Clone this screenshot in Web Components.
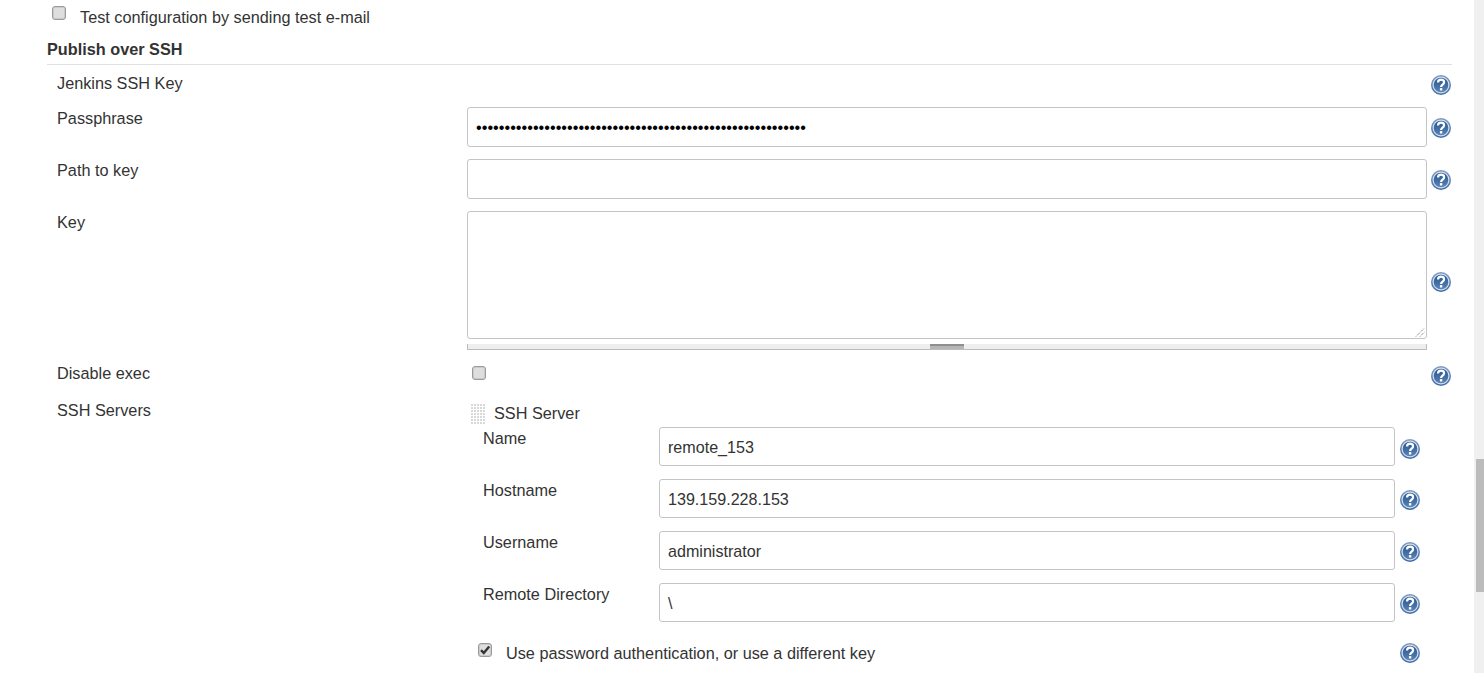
<!DOCTYPE html>
<html>
<head>
<meta charset="utf-8">
<title>Publish over SSH</title>
<style>
  html, body { margin: 0; height: 100%; overflow: hidden; background: #fff; }
  body { font: 16.25px "Liberation Sans", Arial, sans-serif; color: #333; }
</style>
</head>
<body>
<config-page>
  <check-row class="top"><j-check slot="box"></j-check>Test configuration by sending test e-mail</check-row>
  <section-head>Publish over SSH</section-head>

  <form-row label="Jenkins SSH Key" height="30" label-top="8" shift="9"></form-row>
  <form-row label="Passphrase" height="40" gap="12" shift="2">
    <text-field class="pass">••••••••••••••••••••••••••••••••••••••••••••••••••••••••••</text-field>
  </form-row>
  <form-row label="Path to key" height="40" gap="12" shift="2"><text-field></text-field></form-row>
  <form-row label="Key" height="139" gap="12" shift="3"><text-area></text-area></form-row>
  <form-row label="Disable exec" height="28" gap="12" label-top="1" shift="0"><j-check class="inset"></j-check></form-row>

  <server-list label="SSH Servers">
    <drag-head>SSH Server</drag-head>
    <server-row label="Name" gap="3" shift="5"><text-field>remote_153</text-field></server-row>
    <server-row label="Hostname"><text-field>139.159.228.153</text-field></server-row>
    <server-row label="Username"><text-field>administrator</text-field></server-row>
    <server-row label="Remote Directory"><text-field>\</text-field></server-row>
    <check-row class="auth"><j-check slot="box" checked></j-check>Use password authentication, or use a different key<j-help slot="help"></j-help></check-row>
  </server-list>
</config-page>
<page-scrollbar></page-scrollbar>

<script>
const helpTemplate = document.createElement("template");
helpTemplate.innerHTML = `
  <style>
    :host { display: block; width: 22px; height: 22px; flex: none; }
    svg { display: block; width: 22px; height: 22px; }
  </style>
  <svg viewBox="0 0 22 22">
    <defs>
      <linearGradient id="core" x1="0" y1="0" x2="0" y2="1">
        <stop offset="0" stop-color="#24528e"/>
        <stop offset="1" stop-color="#5d86b8"/>
      </linearGradient>
      <linearGradient id="rim" x1="0" y1="0" x2="0" y2="1">
        <stop offset="0" stop-color="#7d9cc4"/>
        <stop offset="1" stop-color="#3f6ca6"/>
      </linearGradient>
    </defs>
    <circle cx="11" cy="11" r="10" fill="url(#rim)"/>
    <circle cx="11" cy="11" r="7.9" fill="url(#core)" stroke="#d3deeb" stroke-width="1.2"/>
    <path d="M8 8.6c0-1.8 1.3-2.9 3.1-2.9s3 1.1 3 2.6c0 2.3-3 2.3-3 4.6" fill="none" stroke="#fff" stroke-width="2.2"/>
    <rect x="9.9" y="14.1" width="2.4" height="2.4" fill="#fff"/>
  </svg>
`;
class JHelp extends HTMLElement {
  constructor() {
    super();
    this.attachShadow({ mode: "open" });
    this.shadowRoot.appendChild(helpTemplate.content.cloneNode(true));
  }
}

const checkTemplate = document.createElement("template");
checkTemplate.innerHTML = `
  <style>
    :host { display: block; width: 14px; height: 14px; flex: none; box-sizing: border-box;
      border: 1px solid #9a9a9a; border-radius: 3px; background: #dedede;
      box-shadow: inset 0 0 0 1px #cacaca; }
    :host(.inset) { margin: 4px 0 0 5px; }
    svg { display: none; width: 12px; height: 12px; }
    :host([checked]) svg { display: block; }
  </style>
  <svg viewBox="0 0 12 12"><path d="M2 6.2l2.8 2.8L10.2 2.6" fill="none" stroke="#333" stroke-width="2.4"/></svg>
`;
class JCheck extends HTMLElement {
  constructor() {
    super();
    this.attachShadow({ mode: "open" });
    this.shadowRoot.appendChild(checkTemplate.content.cloneNode(true));
  }
}

const fieldTemplate = document.createElement("template");
fieldTemplate.innerHTML = `
  <style>
    :host { display: flex; align-items: center; box-sizing: border-box; height: 100%;
      padding: 2px 8px 0; border: 1px solid #c4c4c4; border-radius: 3px; background: #fff;
      font-size: 16.1px; color: #333; white-space: nowrap; overflow: hidden; }
    :host(.pass) { padding: 0 0 0 8px; color: #000; font-size: 16.25px; }
  </style>
  <slot></slot>
`;
class TextField extends HTMLElement {
  constructor() {
    super();
    this.attachShadow({ mode: "open" });
    this.shadowRoot.appendChild(fieldTemplate.content.cloneNode(true));
  }
}

const areaTemplate = document.createElement("template");
areaTemplate.innerHTML = `
  <style>
    :host { display: flex; flex-direction: column; height: 100%; }
    .box { position: relative; flex: none; height: 128px; box-sizing: border-box;
      border: 1px solid #c4c4c4; border-radius: 3px; background: #fff; }
    .box svg { position: absolute; right: 0; bottom: 0; width: 11px; height: 11px; }
    .grip { flex: none; display: flex; justify-content: center; box-sizing: border-box; height: 6px;
      margin-top: 5px; background: #eee; border-bottom: 1px solid #bdbdbd; border-left: 1px solid #bdbdbd; border-right: 1px solid #bdbdbd; }
    .grip i { display: block; width: 34px; height: 5px; background: linear-gradient(#8f8f8f 0, #8f8f8f 2px, #b5b5b5 2px); }
  </style>
  <div class="box">
    <svg viewBox="0 0 11 11"><path d="M1 9.5L9.5 1M5 9.5L9.5 5" stroke="#666" stroke-width="1" stroke-dasharray="1 1" fill="none"/></svg>
  </div>
  <div class="grip"><i></i></div>
`;
class TextArea extends HTMLElement {
  constructor() {
    super();
    this.attachShadow({ mode: "open" });
    this.shadowRoot.appendChild(areaTemplate.content.cloneNode(true));
  }
}

const rowTemplate = document.createElement("template");
rowTemplate.innerHTML = `
  <style>
    :host { display: grid; grid-template-columns: 410px 960px 22px; column-gap: 0; padding-left: 10px; box-sizing: border-box; }
    .label { line-height: 20px; }
    .main { min-width: 0; }
    j-help { align-self: center; margin-left: 3px; }
  </style>
  <div class="label"></div>
  <div class="main"><slot></slot></div>
  <j-help></j-help>
`;
class FormRow extends HTMLElement {
  constructor() {
    super();
    this.attachShadow({ mode: "open" });
    this.shadowRoot.appendChild(rowTemplate.content.cloneNode(true));
  }

  connectedCallback() {
    const label = this.shadowRoot.querySelector(".label");
    label.textContent = this.getAttribute("label");
    label.style.paddingTop = (this.getAttribute("label-top") || 1) + "px";
    this.style.height = this.getAttribute("height") + "px";
    this.style.marginTop = (this.getAttribute("gap") || 0) + "px";
    this.shadowRoot.querySelector("j-help").style.marginTop = (this.getAttribute("shift") || 0) + "px";
  }
}

const serverListTemplate = document.createElement("template");
serverListTemplate.innerHTML = `
  <style>
    :host { display: grid; grid-template-columns: 410px 960px; padding-left: 10px; margin-top: 13px; }
    .label { line-height: 20px; margin-top: -3px; }
  </style>
  <div class="label"></div>
  <div><slot></slot></div>
`;
class ServerList extends HTMLElement {
  constructor() {
    super();
    this.attachShadow({ mode: "open" });
    this.shadowRoot.appendChild(serverListTemplate.content.cloneNode(true));
  }

  connectedCallback() {
    this.shadowRoot.querySelector(".label").textContent = this.getAttribute("label");
  }
}

const dragTemplate = document.createElement("template");
dragTemplate.innerHTML = `
  <style>
    :host { display: flex; align-items: center; gap: 9px; height: 21px; padding-left: 3px; line-height: 20px; }
    i { display: block; width: 15px; height: 21px; flex: none;
      background-image: linear-gradient(#fff 1px, transparent 1px), linear-gradient(90deg, #fff 1px, #d8d8d8 1px);
      background-size: 3px 3px; }
    span { margin-top: -2px; }
  </style>
  <i></i><span><slot></slot></span>
`;
class DragHead extends HTMLElement {
  constructor() {
    super();
    this.attachShadow({ mode: "open" });
    this.shadowRoot.appendChild(dragTemplate.content.cloneNode(true));
  }
}

const serverRowTemplate = document.createElement("template");
serverRowTemplate.innerHTML = `
  <style>
    :host { display: grid; grid-template-columns: 176px 736px 20px; column-gap: 0; height: 39px; margin-top: 13px; padding-left: 16px; }
    .label { line-height: 20px; padding-top: 1px; }
    j-help { align-self: center; margin: 3px 0 0 4px; }
  </style>
  <div class="label"></div>
  <div><slot></slot></div>
  <j-help></j-help>
`;
class ServerRow extends HTMLElement {
  constructor() {
    super();
    this.attachShadow({ mode: "open" });
    this.shadowRoot.appendChild(serverRowTemplate.content.cloneNode(true));
  }

  connectedCallback() {
    this.shadowRoot.querySelector(".label").textContent = this.getAttribute("label");
    if (this.hasAttribute("gap")) this.style.marginTop = this.getAttribute("gap") + "px";
    if (this.hasAttribute("shift")) this.shadowRoot.querySelector("j-help").style.marginTop = this.getAttribute("shift") + "px";
  }
}

const checkRowTemplate = document.createElement("template");
checkRowTemplate.innerHTML = `
  <style>
    :host { display: flex; align-items: center; line-height: 20px; }
    :host(.top) { height: 34px; padding-left: 5px; gap: 14px; }
    :host(.top) ::slotted(j-check) { margin-top: -8px; }
    :host(.auth) { height: 34px; margin-top: 14px; padding-left: 11px; gap: 14px; }
    :host(.auth) ::slotted(j-check) { margin-top: -6px; }
    .text { flex: 1; }
    ::slotted(j-help) { margin-right: 6px; }
  </style>
  <slot name="box"></slot>
  <span class="text"><slot></slot></span>
  <slot name="help"></slot>
`;
class CheckRow extends HTMLElement {
  constructor() {
    super();
    this.attachShadow({ mode: "open" });
    this.shadowRoot.appendChild(checkRowTemplate.content.cloneNode(true));
  }
}

const headTemplate = document.createElement("template");
headTemplate.innerHTML = `
  <style>
    :host { display: block; box-sizing: border-box; height: 31px; padding-top: 5px; line-height: 20px;
      font-weight: bold; border-bottom: 1px solid #e0e0e0; }
  </style>
  <slot></slot>
`;
class SectionHead extends HTMLElement {
  constructor() {
    super();
    this.attachShadow({ mode: "open" });
    this.shadowRoot.appendChild(headTemplate.content.cloneNode(true));
  }
}

const pageTemplate = document.createElement("template");
pageTemplate.innerHTML = `
  <style>
    :host { display: block; box-sizing: border-box; width: 1452px; height: 673px; padding-left: 47px; overflow: hidden; }
  </style>
  <slot></slot>
`;
class ConfigPage extends HTMLElement {
  constructor() {
    super();
    this.attachShadow({ mode: "open" });
    this.shadowRoot.appendChild(pageTemplate.content.cloneNode(true));
  }
}

const barTemplate = document.createElement("template");
barTemplate.innerHTML = `
  <style>
    :host { position: fixed; top: 0; right: 0; bottom: 0; width: 10px; background: #f0f0f0; }
    div { position: absolute; top: 459px; left: 2px; right: 0; height: 133px; background: #bcbcbc; }
  </style>
  <div></div>
`;
class PageScrollbar extends HTMLElement {
  constructor() {
    super();
    this.attachShadow({ mode: "open" });
    this.shadowRoot.appendChild(barTemplate.content.cloneNode(true));
  }
}

customElements.define("j-help", JHelp);
customElements.define("j-check", JCheck);
customElements.define("text-field", TextField);
customElements.define("text-area", TextArea);
customElements.define("form-row", FormRow);
customElements.define("server-list", ServerList);
customElements.define("drag-head", DragHead);
customElements.define("server-row", ServerRow);
customElements.define("check-row", CheckRow);
customElements.define("section-head", SectionHead);
customElements.define("config-page", ConfigPage);
customElements.define("page-scrollbar", PageScrollbar);
</script>
</body>
</html>
